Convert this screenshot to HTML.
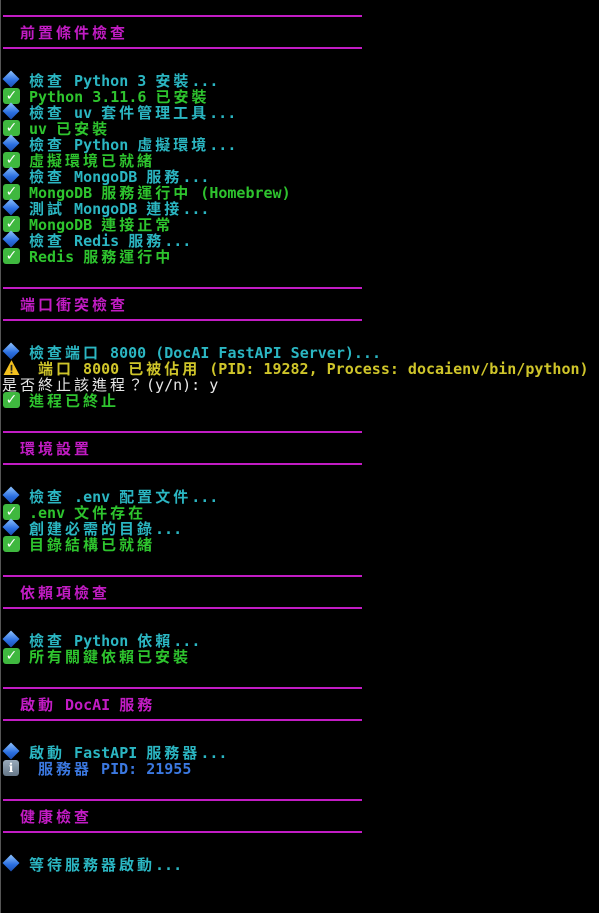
<!DOCTYPE html>
<html><head><meta charset="utf-8"><style>
body{margin:0;width:599px;height:913px;background:#000;position:relative;overflow:hidden;font-family:"DejaVu Sans Mono","Noto Sans CJK TC",monospace;font-size:15px;font-weight:bold}
.bl{position:absolute;left:0;top:0;width:1px;height:913px;background:#555}
.d{position:absolute;left:3px;width:359px;height:2px;background:#c21cc4}
.l{position:absolute;left:29px;height:16px;line-height:16px;white-space:pre;margin-top:1px}
.h{left:20px;color:#c21cc4}
.w{letter-spacing:3px}
.c{color:#2bb6c2}.g{color:#2ec42e}.y{color:#cfc52a}.t{color:#e8e8e8;font-weight:normal}.b{color:#3b78e0}
.ic{position:absolute;left:3px;width:17px;height:17px}
.dia::before{content:"";position:absolute;left:2px;top:2px;width:12px;height:12px;transform:rotate(45deg);background:linear-gradient(135deg,#8fc4ff,#2a6ee0 60%,#1a4fb0)}
.chk{background:#3fb83f;border-radius:3px;width:17px;height:16px;color:#fff;font-size:14px;line-height:16px;text-align:center;font-family:"DejaVu Sans",sans-serif}
.inf{background:linear-gradient(#9ab,#678);border-radius:3px;width:16px;height:16px;color:#fff;font-size:12px;line-height:16px;text-align:center;font-family:"DejaVu Serif",serif}
</style></head><body>
<div class="bl"></div>
<div class="d" style="top:15px"></div><div class="l h" style="top:24px"><span class="w">前置條件檢查</span></div><div class="d" style="top:47px"></div>
<div class="ic dia" style="top:71px"></div><div class="l c" style="top:72px"><span class="w">檢查</span> Python 3 <span class="w">安裝</span>...</div>
<div class="ic chk" style="top:88px">✓</div><div class="l g" style="top:88px">Python 3.11.6 <span class="w">已安裝</span></div>
<div class="ic dia" style="top:103px"></div><div class="l c" style="top:104px"><span class="w">檢查</span> uv <span class="w">套件管理工具</span>...</div>
<div class="ic chk" style="top:120px">✓</div><div class="l g" style="top:120px">uv <span class="w">已安裝</span></div>
<div class="ic dia" style="top:135px"></div><div class="l c" style="top:136px"><span class="w">檢查</span> Python <span class="w">虛擬環境</span>...</div>
<div class="ic chk" style="top:152px">✓</div><div class="l g" style="top:152px"><span class="w">虛擬環境已就緒</span></div>
<div class="ic dia" style="top:167px"></div><div class="l c" style="top:168px"><span class="w">檢查</span> MongoDB <span class="w">服務</span>...</div>
<div class="ic chk" style="top:184px">✓</div><div class="l g" style="top:184px">MongoDB <span class="w">服務運行中</span> (Homebrew)</div>
<div class="ic dia" style="top:199px"></div><div class="l c" style="top:200px"><span class="w">測試</span> MongoDB <span class="w">連接</span>...</div>
<div class="ic chk" style="top:216px">✓</div><div class="l g" style="top:216px">MongoDB <span class="w">連接正常</span></div>
<div class="ic dia" style="top:231px"></div><div class="l c" style="top:232px"><span class="w">檢查</span> Redis <span class="w">服務</span>...</div>
<div class="ic chk" style="top:248px">✓</div><div class="l g" style="top:248px">Redis <span class="w">服務運行中</span></div>

<div class="d" style="top:287px"></div><div class="l h" style="top:296px"><span class="w">端口衝突檢查</span></div><div class="d" style="top:319px"></div>
<div class="ic dia" style="top:343px"></div><div class="l c" style="top:344px"><span class="w">檢查端口</span> 8000 (DocAI FastAPI Server)...</div>
<svg class="ic" style="top:359px" viewBox="0 0 16 16"><path d="M8 1L15.5 15H0.5Z" fill="#f2c01e"/><rect x="7.2" y="5.5" width="1.6" height="5.5" fill="#222"/><rect x="7.2" y="12" width="1.6" height="1.6" fill="#222"/></svg>
<div class="l y" style="top:360px;left:38px"><span class="w">端口</span> 8000 <span class="w">已被佔用</span> (PID: 19282, Process: docaienv/bin/python)</div>
<div class="l t" style="top:376px;left:2px"><span class="w">是否終止該進程？</span>(y/n): y</div>
<div class="ic chk" style="top:392px">✓</div><div class="l g" style="top:392px"><span class="w">進程已終止</span></div>

<div class="d" style="top:431px"></div><div class="l h" style="top:440px"><span class="w">環境設置</span></div><div class="d" style="top:463px"></div>
<div class="ic dia" style="top:487px"></div><div class="l c" style="top:488px"><span class="w">檢查</span> .env <span class="w">配置文件</span>...</div>
<div class="ic chk" style="top:504px">✓</div><div class="l g" style="top:504px">.env <span class="w">文件存在</span></div>
<div class="ic dia" style="top:519px"></div><div class="l c" style="top:520px"><span class="w">創建必需的目錄</span>...</div>
<div class="ic chk" style="top:536px">✓</div><div class="l g" style="top:536px"><span class="w">目錄結構已就緒</span></div>

<div class="d" style="top:575px"></div><div class="l h" style="top:584px"><span class="w">依賴項檢查</span></div><div class="d" style="top:607px"></div>
<div class="ic dia" style="top:631px"></div><div class="l c" style="top:632px"><span class="w">檢查</span> Python <span class="w">依賴</span>...</div>
<div class="ic chk" style="top:648px">✓</div><div class="l g" style="top:648px"><span class="w">所有關鍵依賴已安裝</span></div>

<div class="d" style="top:687px"></div><div class="l h" style="top:696px"><span class="w">啟動</span> DocAI <span class="w">服務</span></div><div class="d" style="top:719px"></div>
<div class="ic dia" style="top:743px"></div><div class="l c" style="top:744px"><span class="w">啟動</span> FastAPI <span class="w">服務器</span>...</div>
<div class="ic inf" style="top:760px">i</div><div class="l b" style="top:760px;left:38px"><span class="w">服務器</span> PID: 21955</div>

<div class="d" style="top:799px"></div><div class="l h" style="top:808px"><span class="w">健康檢查</span></div><div class="d" style="top:831px"></div>
<div class="ic dia" style="top:855px"></div><div class="l c" style="top:856px"><span class="w">等待服務器啟動</span>...</div>
</body></html>
